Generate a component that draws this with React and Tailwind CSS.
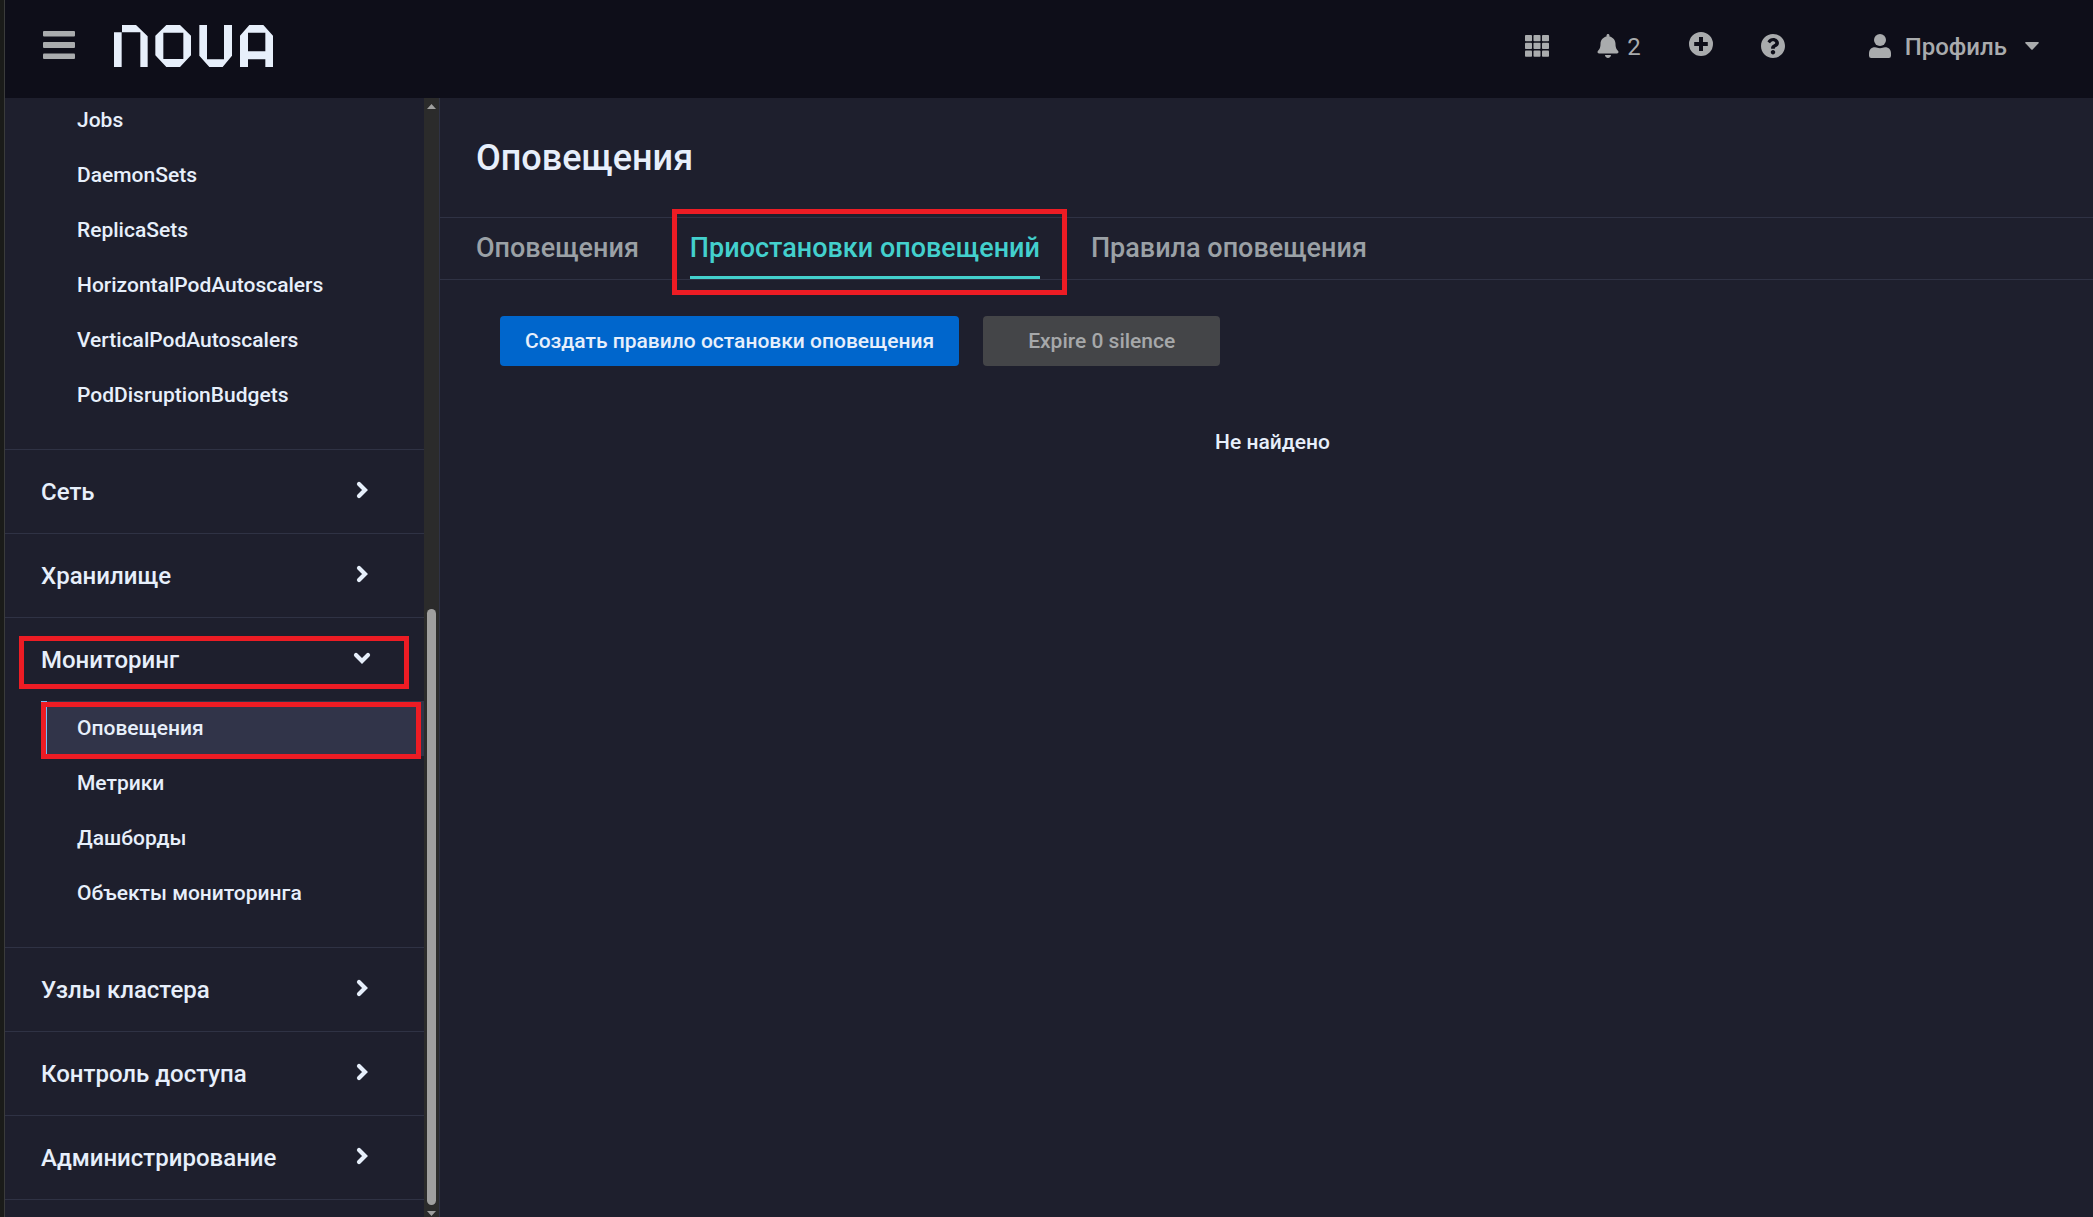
import React, { useState } from 'react';

const WORKLOADS = [
  'Jobs',
  'DaemonSets',
  'ReplicaSets',
  'HorizontalPodAutoscalers',
  'VerticalPodAutoscalers',
  'PodDisruptionBudgets',
];

const SECTIONS = [
  { label: 'Сеть' },
  { label: 'Хранилище' },
  {
    label: 'Мониторинг',
    open: true,
    items: ['Оповещения', 'Метрики', 'Дашборды', 'Объекты мониторинга'],
  },
  { label: 'Узлы кластера' },
  { label: 'Контроль доступа' },
  { label: 'Администрирование' },
];

const TABS = ['Оповещения', 'Приостановки оповещений', 'Правила оповещения'];

/* ── Icons ── */

const Logo = () => (
  <svg className="h-[42px] w-[159px]" viewBox="42 30 477 126" fill="#e7effb" aria-label="NOVA">
    <path d="M42 52H65V156H42ZM66 30H108L143 64V156H121V52H66Z" />
    <path
      fillRule="evenodd"
      d="M199 30H240L273 62V121L240 156H199L166 121V62ZM190 53V132H250V53Z"
    />
    <path d="M298 30H321V133H372V30H396V122L368 156H328L298 122Z" />
    <path
      fillRule="evenodd"
      d="M420 62L448 30H490L519 62V156H496V133H444V156H420ZM444 53V109H496V53Z"
    />
  </svg>
);

const MenuIcon = () => (
  <svg className="h-7 w-8" viewBox="0 0 32 28" fill="currentColor">
    <rect y="0" width="32" height="5.5" rx="1" />
    <rect y="11" width="32" height="6" rx="1" />
    <rect y="22.5" width="32" height="5.5" rx="1" />
  </svg>
);

const GridIcon = () => (
  <svg className="h-[22px] w-6" viewBox="0 0 24 22" fill="currentColor">
    {[0, 7.8, 15.6].map((y) =>
      [0, 8.5, 17].map((x) => <rect key={`${x}-${y}`} x={x} y={y} width="7" height="6.2" rx="0.8" />)
    )}
  </svg>
);

const BellIcon = () => (
  <svg className="h-6 w-[22px]" viewBox="0 0 448 512" fill="currentColor">
    <path d="M224 512c35.32 0 63.97-28.65 63.97-64H160.03c0 35.35 28.65 64 63.97 64zm215.39-149.71c-19.32-20.76-55.47-51.99-55.47-154.29 0-77.7-54.48-139.9-127.94-155.16V32c0-17.67-14.32-32-31.98-32s-31.98 14.33-31.98 32v20.84C118.56 68.1 64.08 130.3 64.08 208c0 102.3-36.15 133.53-55.47 154.29-6 6.45-8.66 14.16-8.61 21.71.11 16.4 12.98 32 32.1 32h383.8c19.12 0 32-15.6 32.1-32 .05-7.55-2.61-15.27-8.61-21.71z" />
  </svg>
);

const PlusIcon = () => (
  <svg className="size-6" viewBox="0 0 24 24" fill="currentColor">
    <path
      fillRule="evenodd"
      d="M12 0a12 12 0 1 1 0 24a12 12 0 0 1 0-24ZM10 5V10H5.2V14H10V19H14V14H18.8V10H14V5Z"
    />
  </svg>
);

const HelpIcon = () => (
  <svg className="size-6" viewBox="8 8 496 496" fill="currentColor">
    <path d="M504 256c0 136.997-111.043 248-248 248S8 392.997 8 256C8 119.083 119.043 8 256 8s248 111.083 248 248zM262.655 90c-54.497 0-89.255 22.957-116.549 63.758-3.536 5.286-2.353 12.415 2.715 16.258l34.699 26.31c5.205 3.947 12.621 3.008 16.665-2.122 17.864-22.658 30.113-35.797 57.303-35.797 20.429 0 45.698 13.148 45.698 32.958 0 14.976-12.363 22.667-32.534 33.976C247.128 238.528 216 254.941 216 296v4c0 6.627 5.373 12 12 12h56c6.627 0 12-5.373 12-12v-1.333c0-28.462 83.186-29.647 83.186-106.667 0-58.002-60.165-102-116.531-102zM256 338c-25.365 0-46 20.635-46 46 0 25.364 20.635 46 46 46s46-20.636 46-46c0-25.365-20.635-46-46-46z" />
  </svg>
);

const UserIcon = () => (
  <svg className="h-6 w-[22px]" viewBox="0 0 22 24" fill="currentColor">
    <circle cx="11" cy="6" r="6" />
    <path d="M6 13.3C8 13.3 8.500 14.200 11 14.200S14 13.300 16 13.300C20 13.300 22 16 22 19.500V21.800Q22 24 19.800 24H2.200Q0 24 0 21.800V19.500C0 16 2 13.300 6 13.300Z" />
  </svg>
);

const Chevron = ({ open }) => (
  <svg
    className={`mb-1 size-[18px] ${open ? 'rotate-90' : ''}`}
    viewBox="0 0 18 18"
    fill="none"
    stroke="currentColor"
    strokeWidth="4.2"
    strokeLinecap="round"
  >
    <path d="M6 3L12 9L6 15" strokeLinejoin="miter" />
  </svg>
);

// Red frame drawn around the element that holds it
const Highlight = ({ className }) => (
  <span className={`pointer-events-none absolute z-10 border-5 border-[#ed1c24] ${className}`} />
);

/* ── Header ── */

const Header = () => (
  <header className="flex h-[98px] shrink-0 items-center justify-between bg-[#0e0e19] pr-[54px] pb-1.5 pl-[38px] text-[#a9abad]">
    <div className="flex items-center gap-[39px]">
      <button aria-label="Меню" className="pb-0.5">
        <MenuIcon />
      </button>
      <Logo />
    </div>
    <div className="flex items-center gap-12 text-2xl">
      <button aria-label="Приложения">
        <GridIcon />
      </button>
      <button className="flex items-center gap-2">
        <BellIcon />
        <span className="pt-0.5 font-normal">2</span>
      </button>
      <button aria-label="Добавить" className="pb-1">
        <PlusIcon />
      </button>
      <button aria-label="Помощь">
        <HelpIcon />
      </button>
      <button className="ml-9 flex items-center">
        <UserIcon />
        <span className="ml-3.5 pt-0.5">Профиль</span>
        <svg className="ml-[18px] h-2 w-3.5" viewBox="0 0 14 8" fill="currentColor">
          <path d="M0.800 0H13.200Q14.300 0.300 13.500 1.200L7.700 7.500Q7 8.200 6.300 7.500L0.500 1.200Q-0.300 0.300 0.800 0Z" />
        </svg>
      </button>
    </div>
  </header>
);

/* ── Sidebar ── */

const SubItem = ({ label, active }) => (
  <li>
    <a
      href="#"
      className={`relative flex h-[55px] items-center border-l-6 pl-[30px] text-[21px] ${
        active ? 'border-[#73bcf7] bg-[#313449]' : 'border-transparent'
      }`}
    >
      {label}
      {active && <Highlight className="top-px right-[3px] -bottom-[3px] -left-1.5" />}
    </a>
  </li>
);

const Section = ({ section, active }) => {
  const [open, setOpen] = useState(Boolean(section.open));

  return (
    <div className="shrink-0 border-t border-[#2f3244]">
      <button
        onClick={() => setOpen(!open)}
        aria-expanded={open}
        className="relative flex h-[83px] w-full items-center justify-between pr-[53px] pl-9 text-2xl"
      >
        {section.label}
        <Chevron open={open} />
        {section.open && <Highlight className="top-[18px] right-[15px] bottom-3 left-3.5" />}
      </button>
      {open && section.items && (
        <ul className="pb-[26px] pl-9">
          {section.items.map((item) => (
            <SubItem key={item} label={item} active={item === active} />
          ))}
        </ul>
      )}
    </div>
  );
};

const ScrollTrack = () => (
  <div className="flex w-4 shrink-0 flex-col items-center border-r border-[#2f3244] bg-[#2b2b2b] pt-1.5 pb-px">
    <svg className="h-[5px] w-[9px]" viewBox="0 0 9 5" fill="#9f9f9f">
      <path d="M4.500 0L9 5H0Z" />
    </svg>
    <div className="flex-[500]" />
    <div className="w-[9px] flex-[596] rounded-full bg-[#9f9f9f]" />
    <svg className="mt-1.5 h-[5px] w-[9px]" viewBox="0 0 9 5" fill="#9f9f9f">
      <path d="M0 0H9L4.500 5Z" />
    </svg>
  </div>
);

// The list is scrolled down, so its content sits against the bottom edge
const Sidebar = () => (
  <aside className="flex w-[435px] shrink-0">
    <nav className="flex min-w-0 flex-1 flex-col justify-end overflow-hidden text-[#e7effb]">
      <ul className="shrink-0 pb-[26px] pl-9">
        {WORKLOADS.map((item) => (
          <SubItem key={item} label={item} />
        ))}
      </ul>
      {SECTIONS.map((section) => (
        <Section key={section.label} section={section} active="Оповещения" />
      ))}
      <div className="h-[18px] shrink-0 border-t border-[#2f3244]" />
    </nav>
    <ScrollTrack />
  </aside>
);

/* ── Content ── */

const Content = () => {
  const [tab, setTab] = useState(TABS[1]);

  return (
    <main className="min-w-0 flex-1 text-[#e7effb]">
      <h1 className="px-9 pt-[41px] pb-[39px] text-4xl leading-[39px] font-medium">Оповещения</h1>

      <div className="flex gap-[51px] border-y border-[#2f3244] px-9" role="tablist">
        {TABS.map((name) => (
          <button
            key={name}
            role="tab"
            aria-selected={name === tab}
            onClick={() => setTab(name)}
            className={`relative border-b-3 pt-3.5 pb-3 text-[27px] leading-8 ${
              name === tab ? 'border-[#43d0cd] text-[#43d0cd]' : 'border-transparent text-[#9ba1a6]'
            }`}
          >
            {name}
            {name === TABS[1] && <Highlight className="-top-[9px] -right-[27px] -bottom-[19px] -left-[18px]" />}
          </button>
        ))}
      </div>

      <div className="pt-9 pr-12 pl-[60px] text-[21px]">
        <div className="flex gap-6">
          <button className="h-[50px] rounded bg-[#0066cc] px-[25px] pt-0.5">
            Создать правило остановки оповещения
          </button>
          <button disabled className="h-[50px] rounded bg-[#444548] px-[45px] pt-0.5 text-[#a6a8aa]">
            Expire 0 silence
          </button>
        </div>
        <p className="mt-[61px] text-center">Не найдено</p>
      </div>
    </main>
  );
};

const App = () => (
  <div className="flex h-screen flex-col border-l-4 border-[#1a1b19] bg-[#1e1f2d] font-['Roboto',sans-serif] font-medium">
    <div className="flex min-h-0 flex-1 flex-col border-l border-[#3a3b3b]">
      <Header />
      <div className="flex min-h-0 flex-1">
        <Sidebar />
        <Content />
      </div>
    </div>
  </div>
);

export default App;
